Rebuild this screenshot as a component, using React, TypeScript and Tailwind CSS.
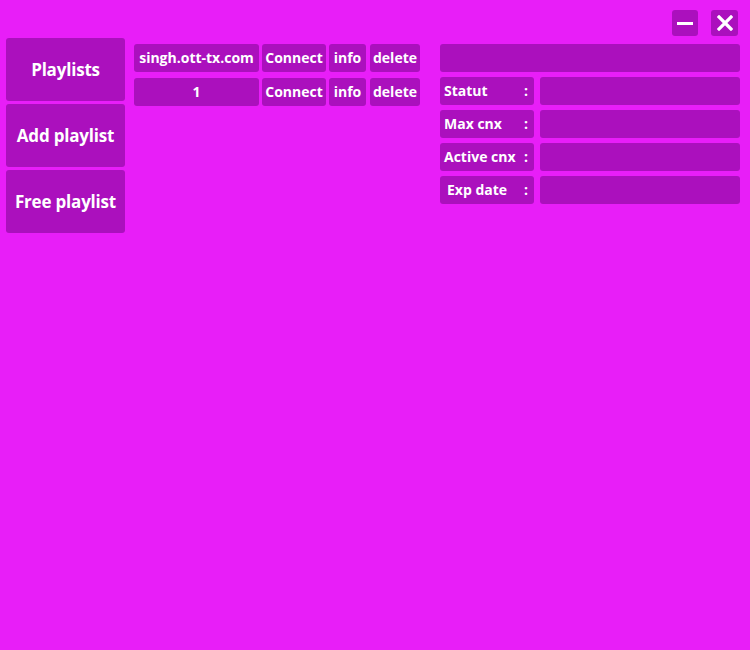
import React from "react";

const font = { fontFamily: '"Open Sans", "Noto Sans", sans-serif' };

const playlists = [
  { name: "singh.ott-tx.com" },
  { name: "1" },
];

const infoRows = ["Statut", "Max cnx", "Active cnx", "Exp date"];

export default function App() {
  return (
    <div style={font} className="w-full h-[650px] bg-[#e81ef8] text-white font-bold overflow-hidden">
      <div className="flex justify-end gap-[13px] pt-[10px] pr-[12px]">
        <button className="w-[26px] h-[26px] rounded-[3px] bg-[#ab10bd] flex items-center justify-center">
          <span className="block w-[16px] h-[3px] bg-white"></span>
        </button>
        <button className="w-[27px] h-[26px] rounded-[3px] bg-[#ab10bd] flex items-center justify-center">
          <svg width="16" height="16" viewBox="0 0 16 16">
            <path d="M2 2 L14 14 M14 2 L2 14" stroke="white" strokeWidth="3.2" strokeLinecap="square" />
          </svg>
        </button>
      </div>

      <div className="flex mt-[2px]">
        <div className="flex flex-col gap-[3px] pl-[6px] w-[125px]">
          {["Playlists", "Add playlist", "Free playlist"].map((label) => (
            <button
              key={label}
              className="w-[119px] h-[63px] rounded-[3px] bg-[#ab10bd] text-[17px] tracking-[-0.2px] flex items-center justify-center"
            >
              {label}
            </button>
          ))}
        </div>

        <div className="flex flex-col gap-[6px] ml-[9px] mt-[6px]">
          {playlists.map((p) => (
            <div key={p.name} className="flex text-[14px] leading-none">
              <div className="w-[125px] h-[28px] rounded-[3px] bg-[#ab10bd] flex items-center justify-center">{p.name}</div>
              <div className="w-[64px] h-[28px] ml-[3px] rounded-[3px] bg-[#ab10bd] flex items-center justify-center">Connect</div>
              <div className="w-[37px] h-[28px] ml-[3px] rounded-[3px] bg-[#ab10bd] flex items-center justify-center">info</div>
              <div className="w-[50px] h-[28px] ml-[4px] rounded-[3px] bg-[#ab10bd] flex items-center justify-center">delete</div>
            </div>
          ))}
        </div>

        <div className="flex flex-col gap-[5px] ml-[20px] mt-[6px] w-[300px]">
          <div className="h-[28px] rounded-[3px] bg-[#ab10bd]"></div>
          {infoRows.map((label) => (
            <div key={label} className="flex gap-[6px] text-[14px] leading-none">
              <div className={`w-[94px] h-[28px] rounded-[3px] bg-[#ab10bd] flex items-center justify-between pr-[6px] ${label === "Exp date" ? "pl-[7px]" : "pl-[4px]"}`}>
                <span>{label}</span>
                <span>:</span>
              </div>
              <div className="w-[200px] h-[28px] rounded-[3px] bg-[#ab10bd]"></div>
            </div>
          ))}
        </div>
      </div>
    </div>
  );
}
